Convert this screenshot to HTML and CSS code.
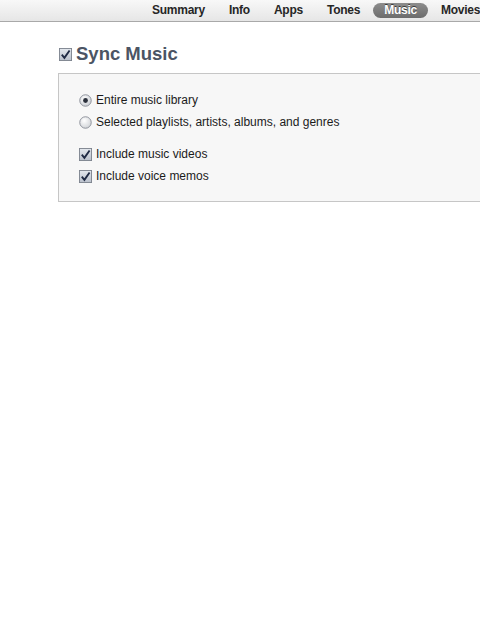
FILE: index.html
```html
<!DOCTYPE html>
<html>
<head>
<meta charset="utf-8">
<link rel="stylesheet" href="styles.css">
</head>
<body>
<div class="tabbar">
  <div class="tabs">
    <span class="tab">Summary</span>
    <span class="tab">Info</span>
    <span class="tab">Apps</span>
    <span class="tab">Tones</span>
    <span class="tab active">Music</span>
    <span class="tab">Movies</span>
  </div>
</div>
<main class="content">
  <h1 class="title">
    <svg class="check big" viewBox="0 0 14 14"><defs><linearGradient id="cg" x1="0" y1="0" x2="0" y2="1"><stop offset="0" stop-color="#e4e8ee"/><stop offset="1" stop-color="#b9c0cb"/></linearGradient></defs><rect x="0.5" y="0.5" width="13" height="13" fill="url(#cg)" stroke="#7d848f"/><path d="M3 7.2 L5.8 10.6 L11.4 2.6" fill="none" stroke="#1f2a44" stroke-width="2"/></svg>
    Sync Music
  </h1>
  <div class="box">
    <div class="group">
      <div class="row">
        <svg class="radio" viewBox="0 0 14 14"><defs><radialGradient id="rg" cx="0.4" cy="0.35" r="0.7"><stop offset="0" stop-color="#ffffff"/><stop offset="1" stop-color="#c8ccd2"/></radialGradient></defs><circle cx="7" cy="7" r="6.2" fill="url(#rg)" stroke="#8a8f98"/><circle cx="7" cy="7" r="2.6" fill="#2a2f3a"/></svg>
        <span>Entire music library</span>
      </div>
      <div class="row">
        <svg class="radio" viewBox="0 0 14 14"><defs><radialGradient id="rg2" cx="0.4" cy="0.35" r="0.7"><stop offset="0" stop-color="#ffffff"/><stop offset="1" stop-color="#cfd2d6"/></radialGradient></defs><circle cx="7" cy="7" r="6.2" fill="url(#rg2)" stroke="#8a8f98"/></svg>
        <span>Selected playlists, artists, albums, and genres</span>
      </div>
    </div>
    <div class="group">
      <div class="row">
        <svg class="check" viewBox="0 0 14 14"><rect x="0.5" y="0.5" width="13" height="13" fill="url(#cg)" stroke="#7d848f"/><path d="M3 7.2 L5.8 10.6 L11.4 2.6" fill="none" stroke="#1f2a44" stroke-width="2"/></svg>
        <span>Include music videos</span>
      </div>
      <div class="row">
        <svg class="check" viewBox="0 0 14 14"><rect x="0.5" y="0.5" width="13" height="13" fill="url(#cg)" stroke="#7d848f"/><path d="M3 7.2 L5.8 10.6 L11.4 2.6" fill="none" stroke="#1f2a44" stroke-width="2"/></svg>
        <span>Include voice memos</span>
      </div>
    </div>
  </div>
</main>
</body>
</html>
```
FILE: styles.css
```css
html, body {
  margin: 0;
  padding: 0;
  background: #ffffff;
  width: 480px;
  overflow: hidden;
}
body {
  font-family: "Liberation Sans", Arial, sans-serif;
}
.tabbar {
  height: 21px;
  background: linear-gradient(#f8f8f8, #e6e6e6);
  border-bottom: 1px solid #a9a9a9;
  overflow: hidden;
}
.tabs {
  display: flex;
  align-items: center;
  height: 21px;
  padding-left: 141px;
  gap: 2px;
  white-space: nowrap;
}
.tab {
  font-weight: bold;
  font-size: 12px;
  letter-spacing: -0.25px;
  color: #262626;
  padding: 0 11px;
  line-height: 15px;
  flex-shrink: 0;
}
.tab.active {
  background: linear-gradient(#8d8d8d, #6c6c6c);
  color: #ffffff;
  border-radius: 8px;
  text-shadow: 0 -1px 0 #3a3a3a;
}
.content {
  padding: 0 0 0 58px;
}
.title {
  display: flex;
  align-items: center;
  gap: 4px;
  margin: 0;
  padding: 21px 0 8px 1px;
  height: 22px;
  font-size: 18.5px;
  font-weight: bold;
  color: #4b5464;
  box-sizing: content-box;
}
.check, .radio {
  width: 13px;
  height: 13px;
  flex-shrink: 0;
}
.box {
  margin-top: 0;
  height: 129px;
  border: 1px solid #c6c6c6;
  border-right: none;
  background: #f7f7f7;
  padding: 15px 0 0 20px;
  box-sizing: border-box;
  display: flex;
  flex-direction: column;
  gap: 10px;
}
.group {
  display: flex;
  flex-direction: column;
}
.row {
  display: flex;
  align-items: center;
  gap: 4px;
  height: 22px;
  font-size: 12px;
  color: #1b1b1b;
}
```
